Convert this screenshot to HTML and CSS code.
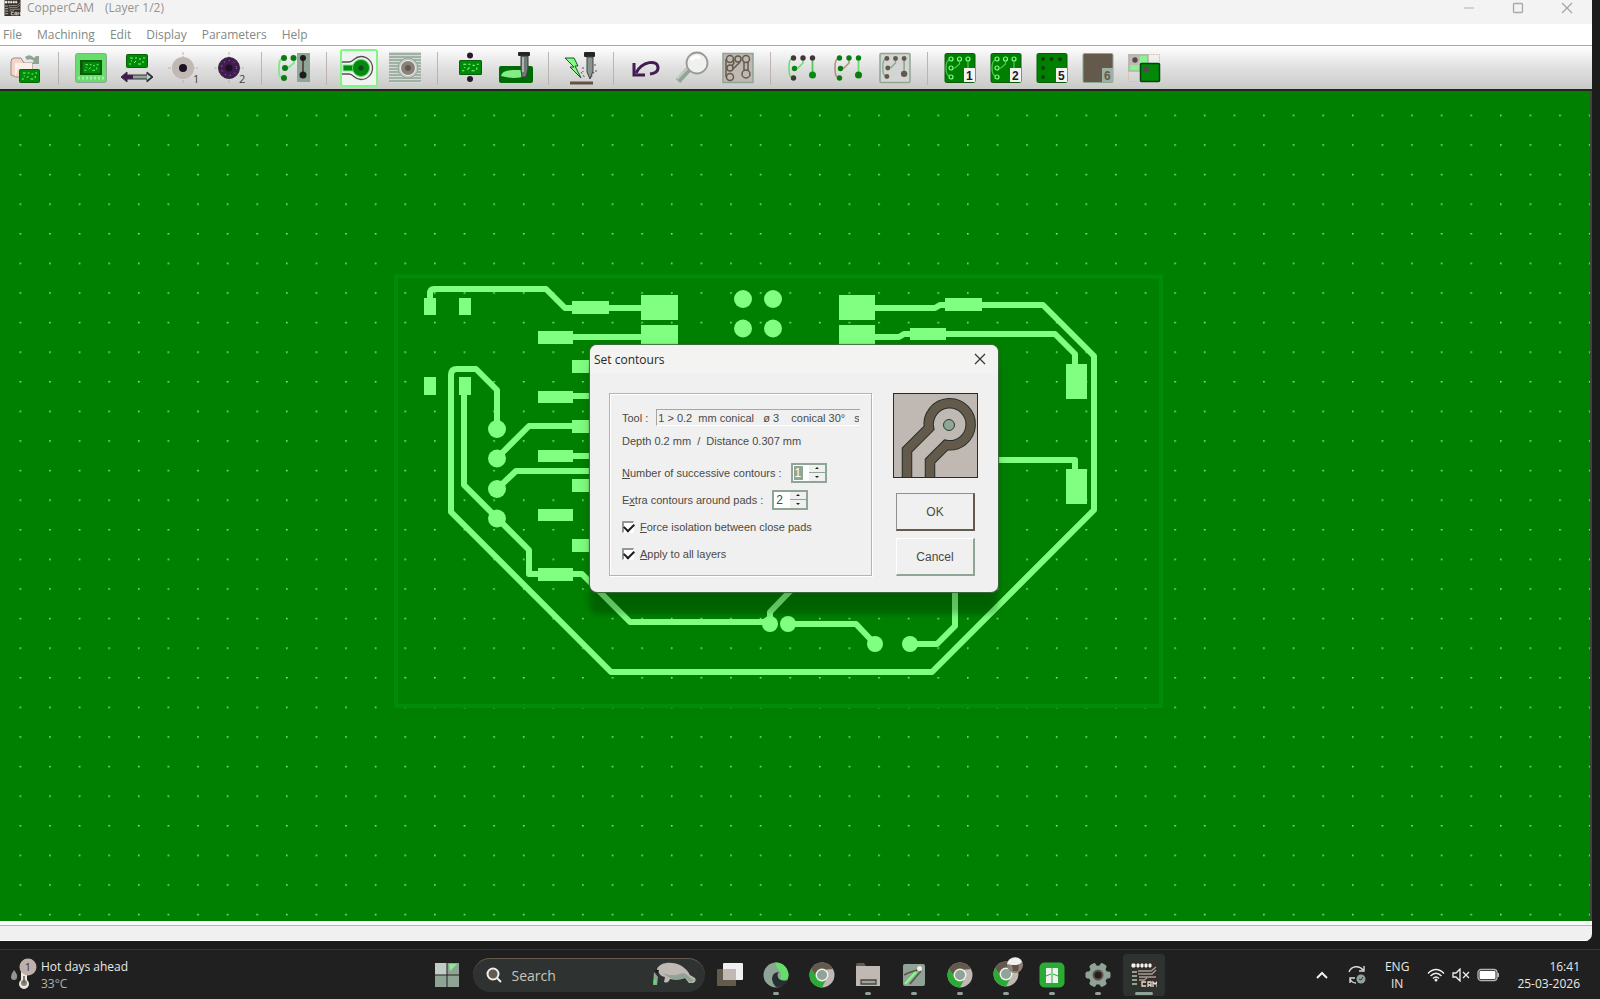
FILE: index.html
```html
<!DOCTYPE html>
<html lang="en">
<head>
<meta charset="utf-8">
<title>CopperCAM</title>
<link rel="stylesheet" href="styles.css">
</head>
<body>
<svg class="defs" aria-hidden="true">
  <symbol id="pcb" viewBox="0 0 22 14" preserveAspectRatio="none">
    <rect x=".5" y=".5" width="21" height="13" rx="1" fill="#008a08" stroke="#0a5f0a"/>
    <path d="M4 4h3M9 4h2M13 5h2M17 4h2M3 10h2M8 9l2-2M12 10h3M17 9v-2M5 7h1" stroke="#80ff80" stroke-width="1" fill="none"/>
  </symbol>
  <symbol id="layer" viewBox="0 0 32 32">
    <rect x="1" y="1.500" width="30" height="29" rx="1.500" fill="#008000" stroke="#0a5a0a"/>
    <g fill="none" stroke="#80ff80" stroke-width="1.200"><circle cx="7" cy="7" r="2"/><circle cx="15.500" cy="7" r="2"/><circle cx="24" cy="7" r="2"/><circle cx="7" cy="16" r="2"/><circle cx="7" cy="25" r="2"/><path d="M9 16h2l4.500-4V9M24 9v7M5 8c-2 1-3 3-3 8s1 6 3 8" stroke="#54c854"/></g>
    <rect x="20" y="16" width="11" height="14" fill="#f4f4f4"/>
  </symbol>
  <symbol id="route" viewBox="0 0 32 32">
    <path class="r-a" d="M6 6C3 7 2 9 2 16s1 9 4 10" fill="none" stroke-width="1.500"/>
    <path class="r-a" d="M8 16h3l5-5V7" fill="none" stroke-width="1.500"/>
    <path class="r-b" d="M25.500 7v16" fill="none" stroke-width="1.800"/>
    <g class="r-c"><circle cx="6.500" cy="6" r="2.700"/><circle cx="16" cy="6" r="2.700"/><circle cx="25.500" cy="6" r="2.700"/><circle cx="6.500" cy="26" r="2.700"/></g>
    <g class="r-d"><circle cx="7.500" cy="16.500" r="2.700"/><circle cx="25.500" cy="23" r="3.500"/></g>
  </symbol>
  <symbol id="chrome" viewBox="0 0 26 26">
    <circle cx="13" cy="13" r="12.500" fill="#bfb8b3"/>
    <path d="M2 7A12.500 12.500 0 0 1 24 7L13 8L8 16Z" fill="#645a4c"/>
    <path d="M2 7A12.500 12.500 0 0 0 13 25.500L18 16H8Z" fill="#2bab35"/>
    <circle cx="13" cy="13" r="6.500" fill="#f0f0ee"/><circle cx="13" cy="13" r="5" fill="#8fa396"/>
  </symbol>
  <symbol id="cam" viewBox="0 0 26 26">
    <rect width="26" height="26" fill="#342f29"/>
    <path d="M1 2h3v3h-3zM6 2h2v3h-2zM10 2h2v3h-2zM14 2h2v3h-2zM18 2h2v3h-2z" fill="#f3f3f3" stroke="#f3f3f3"/>
    <path d="M7 9h13l5-4M7 12h14l4-4M8 15h17M8 18h5l3-2" stroke="#a89d94" stroke-width="1.300" fill="none"/>
    <path d="M1 10h5M1 14h5M1 18h5M1 22h5" stroke="#90a294" stroke-width="2"/>
    <path d="M15 20h-4v4h4M17 25v-5h3v5M17 23h3M22 25v-5l2 2l2-2v5" stroke="#e9ded4" stroke-width="1.300" fill="none"/>
  </symbol>
</svg>

<div class="desktop">
  <main class="window">
    <header class="titlebar">
      <svg class="app-icon"><use href="#cam"/></svg>
      <h1 class="title">CopperCAM<span class="layer-name">(Layer 1/2)</span></h1>
      <div class="captions">
        <button aria-label="Minimize"><svg width="12" height="12"><path d="M1 6h10" stroke="#c2cbc5" stroke-width="1.500"/></svg></button>
        <button aria-label="Maximize"><svg width="12" height="12"><rect x="1.500" y="1.500" width="9" height="9" rx="1" fill="none" stroke="#a9a9a3" stroke-width="1.300"/></svg></button>
        <button aria-label="Close"><svg width="12" height="12"><path d="M1 1l10 10M11 1L1 11" stroke="#a5a59e" stroke-width="1.200"/></svg></button>
      </div>
    </header>
    <nav class="menubar">
      <button>File</button><button>Machining</button><button>Edit</button><button>Display</button><button>Parameters</button><button>Help</button>
    </nav>
    <div class="toolbar" role="toolbar">
      <button aria-label="Open"><svg viewBox="0 0 32 32"><path d="M15 5q5-4 9 1l2-2l3 0v8h-8l3-3q-3-3-7-1z" fill="#8ea596"/><path d="M1 10q0-4 3-4h7l3 5h8v14H6l-5-2z" fill="#f3d6ca" stroke="#a08c80"/><path d="M5 11h17v6H8l-3 8z" fill="#fdeee8"/><use href="#pcb" x="9" y="17" width="21" height="14"/></svg></button>
      <i class="sep"></i>
      <button aria-label="Board"><svg viewBox="0 0 32 32"><rect x=".5" y="1.500" width="31" height="29" rx="2" fill="#66dd6c" stroke="#8fa595"/><path d="M3 26h26" stroke="#a2eea5" stroke-width="3" stroke-dasharray="2 2"/><rect x="5" y="8" width="22" height="15" fill="#0a5a0a"/><use href="#pcb" x="7" y="9" width="19" height="13"/></svg></button>
      <button aria-label="Mirror"><svg viewBox="0 0 32 32"><use href="#pcb" x="5" y="2" width="22" height="14"/><path d="M0 25l6-5v3h20v-3l6 5l-6 5v-3H6v3z" fill="#421b52" stroke="#34303a"/><path d="M12 25h14" stroke="#8fa595" stroke-width="3"/><path d="M26 22l4 3l-4 3z" fill="#a5dfaa"/></svg></button>
      <button aria-label="Drill reference 1"><svg viewBox="0 0 32 32"><path d="M16 0v32M1 16h30" stroke="#bfb0aa" stroke-dasharray="3 1"/><circle cx="16" cy="16" r="11" fill="#bfb8b3"/><circle cx="16" cy="16" r="4" fill="#1b1024"/><text class="num" x="26" y="31">1</text></svg></button>
      <button aria-label="Drill reference 2"><svg viewBox="0 0 32 32"><path d="M16 0v32M1 16h30" stroke="#bfb0aa" stroke-dasharray="3 1"/><circle cx="16" cy="16" r="10.500" fill="#421b52" stroke="#34303a"/><circle cx="16" cy="16" r="7.500" fill="none" stroke="#a38cae" stroke-dasharray="1 4"/><circle cx="16" cy="16" r="3.500" fill="#1b1024"/><text class="num" x="26" y="31">2</text></svg></button>
      <i class="sep"></i>
      <button aria-label="Edit tracks"><svg viewBox="0 0 32 32"><path d="M5 6C2 7 1 9 1 17s1 8 4 9M7 16h3l6-5V7" stroke="#80e885" stroke-width="1.800" fill="none"/><g fill="#0b7c12"><circle cx="6" cy="6" r="3"/><circle cx="15.500" cy="6" r="3"/><circle cx="7" cy="16" r="3"/><circle cx="6" cy="26" r="3"/></g><rect x="19" y="1" width="13" height="29" fill="#8fa595"/><path d="M25 6v17" stroke="#5d4e45" stroke-width="2"/><circle cx="25" cy="6" r="3" fill="#1d1a20"/><circle cx="25" cy="23" r="3.500" fill="#1d1a20"/></svg></button>
      <i class="sep"></i>
      <button class="active" aria-label="Set contours"><svg viewBox="0 0 32 32"><path d="M-1 10h7c5 0 5-5.500 12-5.500a11.500 11.500 0 1 1 0 23c-7 0-7-5.500-12-5.500h-7" fill="none" stroke="#57504c" stroke-width="1.300"/><rect x="0" y="13" width="14" height="6" fill="#008a10" stroke="#80e885"/><circle cx="18" cy="16" r="8.500" fill="#008a10" stroke="#66d86c"/><circle cx="18" cy="16" r="2.500" fill="#233c24"/></svg></button>
      <button aria-label="Hatching"><svg viewBox="0 0 32 32"><rect x="0" y="0" width="32" height="31" fill="#d5d9d6"/><path d="M0 2h32M0 5h32M0 8h32M0 11h32M0 14h32M0 17h32M0 20h32M0 23h32M0 26h32M0 29h32" stroke="#8fa595" stroke-width="1.400"/><circle cx="19" cy="16" r="10" fill="#c2cbc5" stroke="#8fa595"/><circle cx="19" cy="16" r="7.500" fill="#8a8278" stroke="#f0f0f0"/><circle cx="19" cy="16" r="3" fill="#645a4c"/></svg></button>
      <i class="sep"></i>
      <button aria-label="Position"><svg viewBox="0 0 32 32"><circle cx="16" cy="3.500" r="3" fill="#291632"/><use href="#pcb" x="5" y="8" width="23" height="15"/><circle cx="16" cy="27" r="3" fill="#291632"/></svg></button>
      <button aria-label="Mill board"><svg viewBox="0 0 32 32"><rect x="-1" y="14" width="34" height="17" rx="2" fill="#006a08"/><path d="M1 24q1-6 12-6h12l0 6q-10 4-24 0z" fill="#80ee85"/><rect x="18" y="0" width="12" height="4" rx="1" fill="#252525"/><path d="M21 4h7v13l-2 8l-4 0l-1-7z" fill="#707b75" stroke="#3c3c3c"/><path d="M23 5v15" stroke="#eee"/></svg></button>
      <i class="sep"></i>
      <button aria-label="Simulate"><svg viewBox="0 0 32 32"><path d="M0 6h9l4 8h-3l6 12L5 15h4z" fill="#80ff80" stroke="#20502a"/><rect x="19" y="0" width="11" height="5" rx="1" fill="#252525"/><path d="M22 5h6v14l-3 8l-3-7z" fill="#8a958e" stroke="#444"/><path d="M16 20l4 6M18 15v5M30 12v3M29 20l-3 6M31 18v2" stroke="#555" stroke-dasharray="2 2"/><path d="M5 31h23" stroke="#645045" stroke-width="3"/></svg></button>
      <i class="sep"></i>
      <button aria-label="Undo"><svg viewBox="0 0 32 32"><path d="M6 21C12 9 28 7 28 16q0 5-8 6" fill="none" stroke="#421b52" stroke-width="3"/><path d="M4 11v12h11" fill="none" stroke="#421b52" stroke-width="3"/></svg></button>
      <button aria-label="Zoom"><svg viewBox="0 0 32 32"><path d="M13 17L2 29" stroke="#8fa595" stroke-width="6"/><path d="M12 16L1 27" stroke="#c2cbc5" stroke-width="2"/><circle cx="21" cy="11" r="10.500" fill="#eef1ef" stroke="#9b9a93" stroke-width="1.800"/><path d="M15 8q4-5 9-2" stroke="#fff" stroke-width="3" fill="none"/></svg></button>
      <button aria-label="Outline view"><svg viewBox="0 0 32 32"><rect x="1" y="1.500" width="30" height="29" fill="#bfb8b3" stroke="#8fa595" stroke-width="1.500"/><g fill="none" stroke="#645a4c" stroke-width="1.500"><circle cx="8" cy="7" r="3.500"/><circle cx="16" cy="7" r="3"/><circle cx="24" cy="7" r="3.500"/><circle cx="8" cy="16" r="3"/><circle cx="8" cy="25" r="3.500"/><circle cx="24" cy="22" r="4"/><path d="M4 7v18M11 17l7-7M22 10v9M26 10v9M11 7l1 4l-2 3"/></g></svg></button>
      <i class="sep"></i>
      <button class="route-dark" aria-label="Centerlines"><svg><use href="#route"/></svg></button>
      <button class="route-green" aria-label="Tracks"><svg><use href="#route"/></svg></button>
      <button class="route-gray" aria-label="Shadow tracks"><svg viewBox="0 0 32 32"><rect x="1" y="1.500" width="30" height="29" rx="1" fill="#d3d5d2" stroke="#8fa595" stroke-width="1.500"/><use href="#route" x="2" y="1" width="29" height="29"/></svg></button>
      <i class="sep"></i>
      <button aria-label="Layer 1"><svg viewBox="0 0 32 32"><use href="#layer"/><text class="digit" x="22" y="28">1</text></svg></button>
      <button aria-label="Layer 2"><svg viewBox="0 0 32 32"><use href="#layer"/><text class="digit" x="22" y="28">2</text></svg></button>
      <button aria-label="Layer 5"><svg viewBox="0 0 32 32"><rect x="1" y="1.500" width="30" height="29" rx="1.500" fill="#008000" stroke="#0a5a0a"/><g fill="#0a3f0a"><circle cx="7" cy="7" r="2"/><circle cx="15.500" cy="7" r="2"/><circle cx="24" cy="7" r="2"/><circle cx="7" cy="16" r="2"/><circle cx="7" cy="25" r="2"/></g><rect x="20" y="16" width="11" height="14" fill="#f4f4f4"/><text class="digit" x="22" y="28">5</text></svg></button>
      <button aria-label="Layer 6"><svg viewBox="0 0 32 32"><rect x="1" y="1.500" width="30" height="29" rx="1.500" fill="#645a4c" stroke="#8fa595"/><rect x="20" y="16" width="11" height="14" fill="#9fb0a5"/><text class="digit dim" x="22" y="28">6</text></svg></button>
      <button aria-label="All layers"><svg viewBox="0 0 32 32"><rect x=".5" y="2.500" width="31" height="27" fill="none" stroke="#e0b9a8" stroke-dasharray="2 1"/><rect x="1" y="3" width="19" height="16" fill="#8df092" stroke="#a9b5ac" stroke-width="1.500"/><rect x="2" y="4" width="10" height="9" fill="#bfb8b3"/><circle cx="7" cy="8" r="2.700" fill="#57464f"/><rect x="12.500" y="11.500" width="19" height="18" rx="1" fill="#008a08" stroke="#0b3f10" stroke-width="1.500"/><circle cx="18" cy="17.500" r="3" fill="#57464f"/></svg></button>
    </div>

    <section class="canvas">
      <svg class="board" aria-label="Circuit board layout">
        <defs>
          <pattern id="grid" x="19.500" y="23.600" width="29.610" height="29.600" patternUnits="userSpaceOnUse"><rect width="1.600" height="1.500" fill="#7af57f"/></pattern>
        </defs>
        <rect width="100%" height="100%" fill="url(#grid)"/>
        <g transform="translate(0 -91)">
          <rect x="396" y="276.500" width="765" height="429.500" fill="none" stroke="#008c08" stroke-width="4"/>
          <g class="trace">
            <path d="M430 305v-11q0-5 4-5h112l19 19h80M555 337h100M555 396h60M497 458l32-32h50M555 456h60M497 489l19-18h90"/>
            <path d="M497 430v-40l-21-21h-19q-6 0-6 6v137l160 160h321l162-162V356l-51-51H940l-5 3h-70"/>
            <path d="M464 388v97l65 65v24h53l48 48h140M770 624v-12l30-31M788 624h68l19 20M910 644h27l18-18v-40"/>
            <path d="M865 337h34l5-3h151l20 20v16M990 460h85v16"/>
          </g>
          <g class="pad">
            <path d="M424 298h12v17h-12zM459 298h12v17h-12zM424 377h12v18h-12zM459 377h12v18h-12z"/>
            <path d="M572 301h37v13h-37zM572 360h37v13h-37zM572 420h37v13h-37zM572 479h37v13h-37zM572 539h37v13h-37z"/>
            <path d="M538 331h35v13h-35zM538 391h35v12h-35zM538 450h35v12h-35zM538 509h35v12h-35zM538 568h35v13h-35z"/>
            <path d="M641 295h37v25h-37zM641 325h37v25h-37zM839 295h36v25h-36zM839 325h36v25h-36z"/>
            <path d="M945 298h37v13h-37zM910 328h36v12h-36zM1066 364h21v35h-21zM1066 469h21v35h-21z"/>
            <circle cx="743" cy="299" r="9"/><circle cx="773" cy="299" r="9"/><circle cx="743" cy="328.500" r="9"/><circle cx="773" cy="328.500" r="9"/>
            <circle cx="497" cy="429" r="9"/><circle cx="497" cy="458.500" r="9"/><circle cx="497" cy="489" r="9"/><circle cx="497" cy="518.500" r="9"/>
            <circle cx="770" cy="624" r="8"/><circle cx="788" cy="624" r="8"/><circle cx="875" cy="644" r="8"/><circle cx="910" cy="644" r="8"/>
          </g>
        </g>
      </svg>

      <form class="dialog" role="dialog" aria-labelledby="dlg-title">
        <div class="dialog-head">
          <h2 id="dlg-title">Set contours</h2>
          <button type="button" aria-label="Close dialog"><svg width="12" height="12"><path d="M1 1l10 10M11 1L1 11" stroke="#333" stroke-width="1.200"/></svg></button>
        </div>
        <div class="dialog-body">
          <div class="group">
            <div class="row tool-row"><label for="tool">Tool :</label><input id="tool" class="tool" type="text" readonly value="1 &gt; 0.2&nbsp; mm conical&nbsp;&nbsp; ø 3&nbsp;&nbsp;&nbsp; conical 30°&nbsp;&nbsp; straight"></div>
            <p class="row depth">Depth 0.2 mm&nbsp; /&nbsp; Distance 0.307 mm</p>
            <div class="row spin-row"><label for="contours"><u>N</u>umber of successive contours :</label><span class="spin selected"><input id="contours" type="number" value="1"><span class="arrows"><button type="button" aria-label="More contours"></button><button type="button" class="down" aria-label="Fewer contours"></button></span></span></div>
            <div class="row spin-row"><label for="extra">E<u>x</u>tra contours around pads :</label><span class="spin"><input id="extra" type="number" value="2"><span class="arrows"><button type="button" aria-label="More extra contours"></button><button type="button" class="down" aria-label="Fewer extra contours"></button></span></span></div>
            <label class="row check"><input type="checkbox" checked><span><u>F</u>orce isolation between close pads</span></label>
            <label class="row check"><input type="checkbox" checked><span><u>A</u>pply to all layers</span></label>
          </div>
          <div class="side">
            <svg class="preview" viewBox="0 0 85 85">
              <rect x=".5" y=".5" width="84" height="84" fill="#bfb8b3" stroke="#2d2a28"/>
              <g fill="none" stroke="#26302a" stroke-width="10.500"><path d="M14 84V57L36 35A21 21 0 1 1 53 52L37 68V84"/></g>
              <g fill="none" stroke="#645a4c" stroke-width="8.500"><path d="M14 84V57L36 35A21 21 0 1 1 53 52L37 68V84"/></g>
              <circle cx="56" cy="32" r="5.500" fill="#8fa595" stroke="#2d3a31"/>
              <rect x=".5" y=".5" width="84" height="84" fill="none" stroke="#2d2a28"/>
            </svg>
            <button class="push default" type="button">OK</button>
            <button class="push" type="button">Cancel</button>
          </div>
        </div>
      </form>
    </section>
    <footer class="status"></footer>
  </main>

  <footer class="taskbar">
    <div class="weather">
      <svg width="28" height="32" viewBox="0 0 28 32"><path d="M4 12q4 5 3 7a3 3 0 0 1-6 0q0-3 3-7z" fill="#90968e"/><path d="M11 4h6v18a5 5 0 1 1-6 0z" fill="#eee8e2"/><circle cx="14" cy="25" r="3" fill="#8a8278"/><path d="M14 18v7" stroke="#645a4c" stroke-width="1.500"/><circle cx="18" cy="9" r="8.500" fill="#bfb0aa"/><text class="badge" x="18" y="13" text-anchor="middle">1</text></svg>
      <p><span class="head">Hot days ahead</span><span class="temp">33°C</span></p>
    </div>
    <div class="apps">
      <button class="start" aria-label="Start"><svg width="26" height="26"><path d="M1 1h11.500v11.500H1z" fill="#c2cbc5"/><path d="M13.500 1H25v11.500H13.500zM1 13.500h11.500V25H1zM13.500 13.500H25V25H13.500z" fill="#8fa396"/><path d="M15 2h8l-7 7z" fill="#8eea91"/></svg></button>
      <label class="search">
        <svg width="18" height="18"><circle cx="8" cy="8" r="5.500" fill="#645a4c" stroke="#eee" stroke-width="2"/><path d="M12 12l4 4" stroke="#eee" stroke-width="2"/></svg>
        <input type="text" placeholder="Search" aria-label="Search">
        <svg width="46" height="28" viewBox="0 0 46 28"><path d="M6 8C9 1 20 0 29 4q7 4 10 10l5 3q2 3-2 5l-4 0l-4-5q-8 3-15 1q-2 5-6 3l1-5q-6-1-8-8z" fill="#bfb8b3"/><path d="M12 12q8 4 17 1q5-2 8 2l6 4l-3 3l-6-5q-12 5-22-5z" fill="#8fa396"/><path d="M3 11l4 5l-1 8H2z" fill="#8fa396"/><path d="M2 21l2-4l2 5l-2 1z" fill="#56df60"/><path d="M3 9l5 0l-1 4z" fill="#1c1c1c"/></svg>
      </label>
      <button aria-label="Task view"><svg width="28" height="26"><rect x="1" y="7" width="19" height="17" rx="1" fill="#645a4c"/><rect x="7" y="1" width="20" height="17" rx="1" fill="#f0f0f0"/><rect x="7" y="7" width="13" height="11" fill="#bfb8b3"/></svg></button>
      <button class="running" aria-label="Edge"><svg width="26" height="26"><circle cx="13" cy="13" r="12.500" fill="#8fa396"/><path d="M12 .5A12.500 12.500 0 0 1 25 16q-4 3-8 1q3-5-1-9q-3-3-4-7.500z" fill="#62e168"/><path d="M25 18q-5 2-9-1q-3-4 0-7q-6 0-7 6q0 5 4 9q8 1 12-7z" fill="#26302f"/></svg></button>
      <button aria-label="Chrome"><svg width="26" height="26"><use href="#chrome"/></svg></button>
      <button class="running" aria-label="File explorer"><svg width="26" height="26"><path d="M1 3q0-2 2-2h6l2 3h-10z" fill="#645a4c"/><path d="M1 4h24v20H1z" fill="#bfb8b3"/><path d="M6 22v-4h15v4z" fill="#9aa59c" stroke="#49443c" stroke-width="1.300"/></svg></button>
      <button class="running" aria-label="Design tool"><svg width="26" height="26"><rect x="2" y="2" width="22" height="22" rx="2" fill="#8fa396"/><path d="M3 13l4-2l9-3l3-3M9 22L20 9" stroke="#5f564b" stroke-width="1.500" fill="none"/><path d="M4 22L15 10" stroke="#80ff80" stroke-width="2.500"/><circle cx="18.500" cy="6.500" r="2.500" fill="#f4efe9"/></svg></button>
      <button class="running" aria-label="Chrome profile"><svg width="26" height="26"><use href="#chrome"/></svg></button>
      <button class="running" aria-label="Chrome second profile"><svg class="wide" width="32" height="32"><use href="#chrome" x="0" y="5" width="26" height="26"/><circle cx="22" cy="9" r="8" fill="#8a8278"/><path d="M14 8a8 8 0 0 1 15-2q-4 5-15 2z" fill="#f0f0ee"/><path d="M19 9h7l-1 6h-5z" fill="#645045"/></svg></button>
      <button class="running" aria-label="Store"><svg width="26" height="26"><rect x=".5" y=".5" width="25" height="25" rx="5" fill="#2bab35"/><path d="M7 6h5.500v15H7zM13.500 6H19v15h-5.500z" fill="#f0f0ee"/><path d="M7 14l5-2M14 12l5 2" stroke="#2bab35"/></svg></button>
      <button class="running" aria-label="Settings"><svg width="26" height="26" viewBox="-13 -13 26 26"><g fill="#8fa396"><circle r="9.500"/><rect x="-3.500" y="-12.500" width="7" height="25" rx="2" transform="rotate(30)"/><rect x="-3.500" y="-12.500" width="7" height="25" rx="2" transform="rotate(90)"/><rect x="-3.500" y="-12.500" width="7" height="25" rx="2" transform="rotate(150)"/></g><circle r="4.500" fill="#202020" stroke="#645045" stroke-width="2"/></svg></button>
      <button class="running current" aria-label="CopperCAM"><svg width="26" height="26"><use href="#cam"/></svg></button>
    </div>
    <div class="tray">
      <button aria-label="Hidden icons"><svg width="14" height="10"><path d="M2 8l5-5l5 5" stroke="#eee" stroke-width="2" fill="none"/></svg></button>
      <button aria-label="Update"><svg width="20" height="20"><path d="M2 7a8 8 0 0 1 14-2M17 1v5h-5M3 18v-5h5M3 14q2 4 6 4" stroke="#d8d8d8" stroke-width="1.400" fill="none"/><circle cx="14" cy="14" r="4.500" fill="#8fa396"/><path d="M12 14l2 1l2-3" stroke="#333" fill="none"/></svg></button>
      <button class="lang">ENG<br>IN</button>
      <button class="net" aria-label="Network, volume and battery">
        <svg width="18" height="14"><path d="M1 5.500q8-8 16 0M3.500 8q5.500-5.500 11 0M6 10.500q3-3 6 0" fill="none" stroke="#eee" stroke-width="1.400"/><circle cx="9" cy="12" r="1.500" fill="#eee"/></svg>
        <svg width="18" height="14"><path d="M1 5h3l4-4v12l-4-4H1z" fill="none" stroke="#eee" stroke-width="1.300"/><path d="M11 4l6 6M17 4l-6 6" stroke="#eee" stroke-width="1.300"/></svg>
        <svg width="22" height="14"><rect x="1" y="1.500" width="19" height="11" rx="3" fill="none" stroke="#bbb3ad" stroke-width="1.300"/><rect x="2.500" y="3" width="16" height="8" rx="1" fill="#fff"/><path d="M21 5v4" stroke="#bbb3ad" stroke-width="2"/></svg>
      </button>
      <button class="clock">16:41<br>25-03-2026</button>
    </div>
  </footer>
</div>
</body>
</html>
```
FILE: styles.css
```css
* { box-sizing: border-box; }

body {
  margin: 0;
  background: #1c1c1c;
  font-family: "Open Sans", "Noto Sans", sans-serif;
  font-size: 12px;
}

h1, h2, p { margin: 0; font-weight: 400; }

button {
  margin: 0;
  padding: 0;
  border: 0;
  background: none;
  color: inherit;
  font: inherit;
}

svg { display: block; }

.defs { position: absolute; width: 0; height: 0; }

.desktop {
  display: flex;
  flex-direction: column;
  height: 100vh;
}

.window {
  flex: 1;
  display: flex;
  flex-direction: column;
  min-height: 0;
  margin: 0 8px 8px 0;
  background: #f0f0f0;
  border-radius: 0 0 7px 0;
  overflow: hidden;
}

.titlebar {
  display: flex;
  align-items: flex-start;
  height: 24px;
  padding-left: 4px;
  background: #f3f3f3;
}

.app-icon { width: 17px; height: 16px; }

.title {
  margin-left: 6px;
  font-size: 12px;
  line-height: 16px;
  color: #96938f;
}

.layer-name { margin-left: 11px; }

.captions {
  display: flex;
  gap: 37px;
  margin: 2px 19px 0 auto;
}

.menubar {
  display: flex;
  gap: 15px;
  height: 22px;
  padding: 0 3px;
  background: #fff;
  border-bottom: 1px solid #a9a9a6;
  color: #7f8a82;
}

.toolbar {
  display: flex;
  align-items: center;
  height: 45px;
  padding: 1px 0 0 3px;
  background: linear-gradient(#fff, #f0f0f0 25%, #dedede 55%, #d4d3d2 80%, #c5cac6);
  border-bottom: 2px solid #27221f;
}

.toolbar button {
  display: flex;
  align-items: center;
  justify-content: center;
  width: 46px;
  height: 38px;
}

.toolbar svg { width: 32px; height: 32px; overflow: visible; }

.toolbar .active { width: 38px; margin: 0 4px; background: #f0f4f0; border: 2px solid #80f485; border-radius: 3px; }

.sep { width: 1px; height: 33px; margin: 0 9px; background: #bdb4af; }

.num { font: 11px "Open Sans", sans-serif; fill: #443f3b; }
.digit { font: bold 12px "Liberation Sans", sans-serif; fill: #1d1d1d; }
.dim { fill: #645a4c; }

.route-dark { --a: #66dd6c; --b: #54c85a; --c: #43363b; --d: #078a10; }
.route-green { --a: #b48c80; --b: #66dd6c; --c: #087d10; --d: #087d10; }
.route-gray { --a: #8fa595; --b: #8fa595; --c: #645a4c; --d: #645a4c; }
.r-a { stroke: var(--a); }
.r-b { stroke: var(--b); }
.r-c { fill: var(--c); }
.r-d { fill: var(--d); }

.canvas {
  position: relative;
  flex: 1;
  min-height: 0;
  background: #008000;
  border-right: 2px solid #3d4a35;
}

.board { width: 100%; height: 100%; }

.trace { fill: none; stroke: #80ff80; stroke-width: 6; stroke-linejoin: round; }
.pad { fill: #80ff80; }

.status {
  height: 20px;
  border-top: 4px solid #fafafa;
  border-bottom: 1px solid #fff;
  box-shadow: inset 0 1px #b9b5b1;
}

/* Set contours dialog */
.dialog {
  position: absolute;
  left: 590px;
  top: 254px;
  width: 408px;
  background: #f0f0f0;
  border-radius: 7px;
  box-shadow: 0 0 1px 1px #3f6a3f, 0 22px 6px rgba(0, 0, 0, .22), 0 6px 18px rgba(0, 40, 0, .12);
  font: 12px "Liberation Sans", Arial, sans-serif;
  color: #4b4a45;
}

.dialog-head {
  display: flex;
  align-items: center;
  justify-content: space-between;
  height: 28px;
  padding: 0 12px 0 4px;
  background: #f3f3f1;
  border-radius: 7px 7px 0 0;
  color: #262626;
}

.dialog-head h2 { font: 12px "Open Sans", sans-serif; }

.dialog-body {
  display: flex;
  gap: 21px;
  padding: 20px 20px 16px 19px;
}

.group {
  flex: 1;
  min-width: 0;
  padding: 12px 11px 8px 12px;
  border: 1px solid #b9b3ad;
  box-shadow: 1px 1px #fff, inset 1px 1px #fff;
}

.row { display: flex; align-items: center; height: 27px; font-size: 11px; line-height: 16px; white-space: nowrap; }
.tool-row { gap: 8px; height: 23px; }
.depth { height: 24px; }
.spin-row { gap: 9px; }
.depth + .spin-row { margin-top: 6px; }
.check { gap: 6px; }

.tool {
  flex: 1;
  min-width: 0;
  height: 17px;
  padding: 0 1px;
  border: solid;
  border-width: 1px 0 1px 1px;
  border-color: #a9a5a0 #fff #fff #a9a5a0;
  background: #f0f0f0;
  font: inherit;
  color: inherit;
}

.spin {
  display: flex;
  width: 36px;
  height: 20px;
  border: 2px solid #8fa595;
  background: #fff;
}

.spin input {
  width: 16px;
  min-width: 0;
  padding: 0 0 0 2px;
  border: 0;
  background: none;
  font: inherit;
  font-size: 12px;
  color: #4b4a45;
  appearance: textfield;
}

.spin input::-webkit-inner-spin-button { appearance: none; margin: 0; }
.spin.selected input { width: 9px; margin: 1px 6px 1px 1px; padding-left: 1px; background: #8fa595; color: #fff; }

.arrows { flex: 1; display: flex; flex-direction: column; }

.arrows button {
  flex: 1;
  display: flex;
  align-items: center;
  justify-content: center;
  background: #f0f0f0;
  border-bottom: 1px solid #8fa595;
}

.arrows .down { border-bottom: 0; }

.arrows button::before {
  content: "";
  border: 2px solid transparent;
  border-top-width: 0;
  border-bottom-color: #222;
}

.arrows .down::before { border-width: 2px 2px 0; border-color: #222 transparent; }

.check input {
  appearance: none;
  display: grid;
  place-items: center;
  width: 12px;
  height: 12px;
  margin: 0;
  border: 1px solid #fff;
  border-top: 2px solid #8f9b93;
  border-left: 2px solid #8f9b93;
  background: #fff;
}

.check input:checked::before {
  content: "";
  width: 8px;
  height: 5px;
  margin-bottom: 3px;
  border: solid #1c1c1c;
  border-width: 0 0 2px 2px;
  rotate: -45deg;
}

.side { display: flex; flex-direction: column; width: 85px; }
.preview { width: 85px; height: 85px; margin-bottom: 15px; }

.push {
  width: 79px;
  height: 38px;
  margin: 0 0 7px 3px;
  border: 1px solid #fff;
  border-right: 2px solid #8fa595;
  border-bottom: 2px solid #8fa595;
  font-size: 12px;
}

.push:last-child { margin-bottom: 0; }
.default { border-color: #8b938c #645a4c #645a4c #8b938c; }

/* Taskbar */
.taskbar {
  display: grid;
  grid-template-columns: 1fr auto 1fr;
  align-items: center;
  height: 50px;
  background: #202020;
  border-top: 1px solid #383838;
  color: #e9e9e6;
}

.weather { display: flex; gap: 3px; padding-left: 10px; }
.weather p { display: flex; flex-direction: column; line-height: 17px; }
.head { font-size: 12px; }
.temp { color: #b5b3ad; }
.badge { font: 11px "Open Sans", sans-serif; fill: #3a3532; }

.apps { display: flex; align-items: center; padding-right: 2px; }

.apps button {
  position: relative;
  display: grid;
  place-items: center;
  width: 42px;
  height: 42px;
  margin: 0 2px;
  border-radius: 4px;
}

.apps .start { width: 26px; margin: 0 13px 0 0; }
.apps .wide { margin: -6px -6px 0 0; }
.apps .current { margin-right: 0; background: #2e3331; }

.running::after {
  content: "";
  position: absolute;
  bottom: 1px;
  left: 50%;
  width: 6px;
  height: 3px;
  margin-left: -3px;
  border-radius: 2px;
  background: #8fa396;
}

.current::after { width: 18px; margin-left: -9px; }

.search {
  display: flex;
  align-items: center;
  width: 232px;
  height: 34px;
  margin-right: 2px;
  padding: 0 8px 0 12px;
  border-radius: 17px;
  background: #2e3331;
  border-top: 1px solid #645a4c;
}

.search input {
  flex: 1;
  min-width: 0;
  padding: 0 0 0 9px;
  border: 0;
  background: none;
  font: 14px "Open Sans", sans-serif;
}

.search input::placeholder { color: #c9c4bd; opacity: 1; }

.tray {
  display: flex;
  align-items: center;
  justify-content: flex-end;
  padding-right: 20px;
  line-height: 17px;
}

.tray button + button { margin-left: 18px; }
.net { display: flex; gap: 7px; }
.tray .clock { text-align: right; }
```
